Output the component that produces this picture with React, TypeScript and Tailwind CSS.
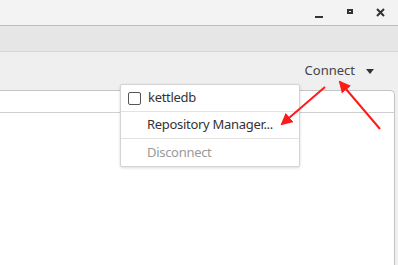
import React from 'react';

function WindowControls() {
    return (
        <div className="flex items-center h-full">
            {/* minimise */}
            <div className="w-[31px] flex justify-center">
                <div className="mt-[9px] w-[8px] h-[2px] bg-[#2e3436]" />
            </div>
            {/* maximise */}
            <div className="w-[31px] flex justify-center">
                <div className="mb-[3px] w-[6px] h-[5px] border-2 border-[#2e3436]" />
            </div>
            {/* close */}
            <div className="w-[31px] flex justify-center">
                <svg width="9" height="9" viewBox="0 0 9 9" className="mb-[1px]">
                    <path d="M1 1 8 8M8 1 1 8" stroke="#2e3436" strokeWidth="2" />
                </svg>
            </div>
        </div>
    );
}

function MenuRow({ children, last }: { children: React.ReactNode; last?: boolean }) {
    return (
        <div className={`h-[27px] flex items-center ${last ? '' : 'border-b border-[#e3e3e3]'}`}>
            {children}
        </div>
    );
}

export default function App() {
    return (
        <div className="relative w-[398px] h-[265px] overflow-hidden bg-white font-['Noto_Sans',sans-serif] text-[#333]">
            {/* title bar */}
            <div className="h-[26px] bg-[#f3f3f3] border-b border-[#bdbdbd] flex justify-end pr-[2px]">
                <WindowControls />
            </div>
            {/* toolbar strip */}
            <div className="h-[26px] bg-[#e6e6e6] border-b border-[#d6d6d6]" />
            {/* header with Connect */}
            <div className="h-[38px] bg-[#efefef] flex items-center justify-end pr-[24px] pb-[1px]">
                <span className="text-[13px] leading-none text-[#444]">Connect</span>
                <svg width="8" height="5" viewBox="0 0 8 5" className="ml-[11px] mt-[1px]">
                    <path d="M0 0h8L4 5z" fill="#2e3436" />
                </svg>
            </div>
            {/* main panel */}
            <div className="bg-[#efefef]">
                <div className="mr-[3px] h-[175px] bg-white border-t border-r border-[#c4c4c4] rounded-tr-[5px]">
                    <div className="h-[22px] border-b border-[#cfcfcf]" />
                </div>
            </div>

            {/* dropdown menu */}
            <div className="absolute left-[120px] top-[84px] w-[180px] bg-white border border-[#d4d4d4] rounded-[2px] shadow-[0_1px_3px_rgba(0,0,0,0.15)] text-[13px] tracking-[-0.3px]">
                <MenuRow>
                    <div className="ml-[7px] w-[13px] h-[13px] border border-[#555] rounded-[2px]" />
                    <span className="ml-[7px]">kettledb</span>
                </MenuRow>
                <MenuRow>
                    <span className="ml-[26px]">Repository Manager...</span>
                </MenuRow>
                <MenuRow last>
                    <span className="ml-[26px] text-[#9a9a9a]">Disconnect</span>
                </MenuRow>
            </div>

            {/* red annotation arrows */}
            <svg className="absolute left-0 top-0 pointer-events-none" width="398" height="265">
                <defs>
                    <marker id="head" markerWidth="6" markerHeight="6" refX="5" refY="3" orient="auto" markerUnits="strokeWidth">
                        <path d="M0 0 6 3 0 6z" fill="#ff1a1a" />
                    </marker>
                </defs>
                <line x1="325" y1="87" x2="282" y2="124" stroke="#ff1a1a" strokeWidth="2" markerEnd="url(#head)" />
                <line x1="380" y1="129" x2="340" y2="82" stroke="#ff1a1a" strokeWidth="2" markerEnd="url(#head)" />
            </svg>
        </div>
    );
}
